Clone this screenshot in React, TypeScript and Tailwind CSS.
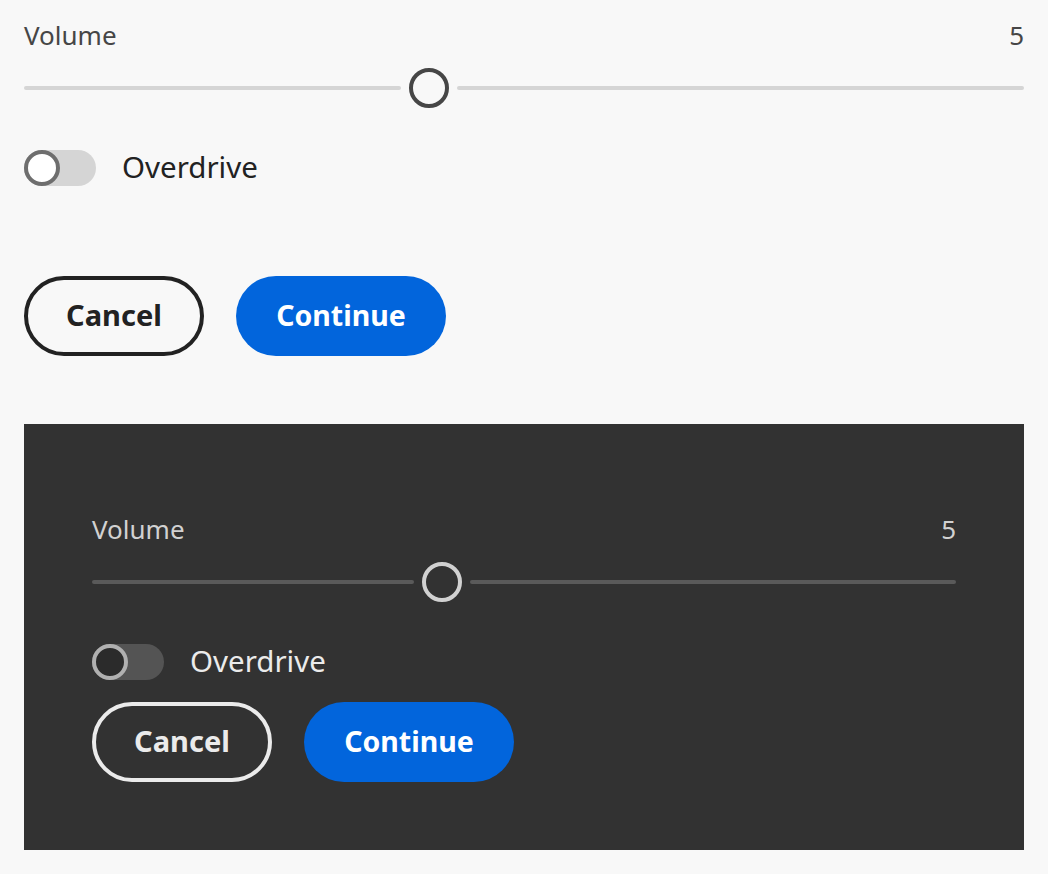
import React from 'react'

const font = { fontFamily: '"Noto Sans", "Open Sans", sans-serif' }

interface Theme {
  label: string
  text: string
  track: string
  thumb: string
  switchTrack: string
  switchThumb: string
  cancel: string
}

const light: Theme = {
  label: 'text-[#464646]',
  text: 'text-[#222222]',
  track: 'bg-[#d5d5d5]',
  thumb: 'border-[#464646] bg-[#f8f8f8]',
  switchTrack: 'bg-[#d5d5d5]',
  switchThumb: 'border-[#6e6e6e] bg-white',
  cancel: 'border-[#222222] text-[#222222]',
}

const dark: Theme = {
  label: 'text-[#d1d1d1]',
  text: 'text-[#ebebeb]',
  track: 'bg-[#5a5a5a]',
  thumb: 'border-[#d1d1d1] bg-[#323232]',
  switchTrack: 'bg-[#545454]',
  switchThumb: 'border-[#b0b0b0] bg-[#2b2b2b]',
  cancel: 'border-[#ebebeb] text-[#ebebeb]',
}

const Slider: React.FC<{ t: Theme; pct: number }> = ({ t, pct }) => (
  <div className="relative h-10 w-full">
    {/* track left */}
    <div
      className={`absolute left-0 top-[18px] h-1 rounded-full ${t.track}`}
      style={{ width: `calc(${pct}% - 28px)` }}
    />
    {/* track right */}
    <div
      className={`absolute right-0 top-[18px] h-1 rounded-full ${t.track}`}
      style={{ left: `calc(${pct}% + 28px)` }}
    />
    <div
      className={`absolute top-0 h-10 w-10 -translate-x-1/2 rounded-full border-4 ${t.thumb}`}
      style={{ left: `${pct}%` }}
    />
  </div>
)

const Controls: React.FC<{ t: Theme; buttonGap: string }> = ({ t, buttonGap }) => (
  <div className="flex flex-col">
    <div className="flex h-8 items-center justify-between pb-[5px]">
      <span className={`text-[26px] ${t.label}`}>Volume</span>
      <span className={`text-[26px] ${t.label}`}>5</span>
    </div>
    <div className="mt-[14px]">
      <Slider t={t} pct={40.5} />
    </div>
    <div className="mt-[42px] flex h-9 items-center">
      <div className={`relative h-9 w-[72px] rounded-full ${t.switchTrack}`}>
        <div className={`absolute left-0 top-0 h-9 w-9 rounded-full border-4 ${t.switchThumb}`} />
      </div>
      <span className={`ml-[26px] pb-[2px] text-[29.5px] ${t.text}`}>Overdrive</span>
    </div>
    <div className={`flex gap-8 ${buttonGap}`}>
      <button className={`h-20 w-[180px] rounded-full border-4 pb-[2px] text-[29px] font-bold ${t.cancel}`}>
        Cancel
      </button>
      <button className="h-20 w-[210px] rounded-full bg-[#0265dc] pb-[2px] text-[28.5px] font-bold text-white">
        Continue
      </button>
    </div>
  </div>
)

const App: React.FC = () => {
  return (
    <div className="min-h-screen bg-[#f8f8f8] px-6 pb-6 pt-[22px]" style={font}>
      <Controls t={light} buttonGap="mt-[90px]" />
      <div className="mt-[68px] bg-[#323232] px-[68px] pb-[68px] pt-[92px]">
        <Controls t={dark} buttonGap="mt-[22px]" />
      </div>
    </div>
  )
}

export default App
